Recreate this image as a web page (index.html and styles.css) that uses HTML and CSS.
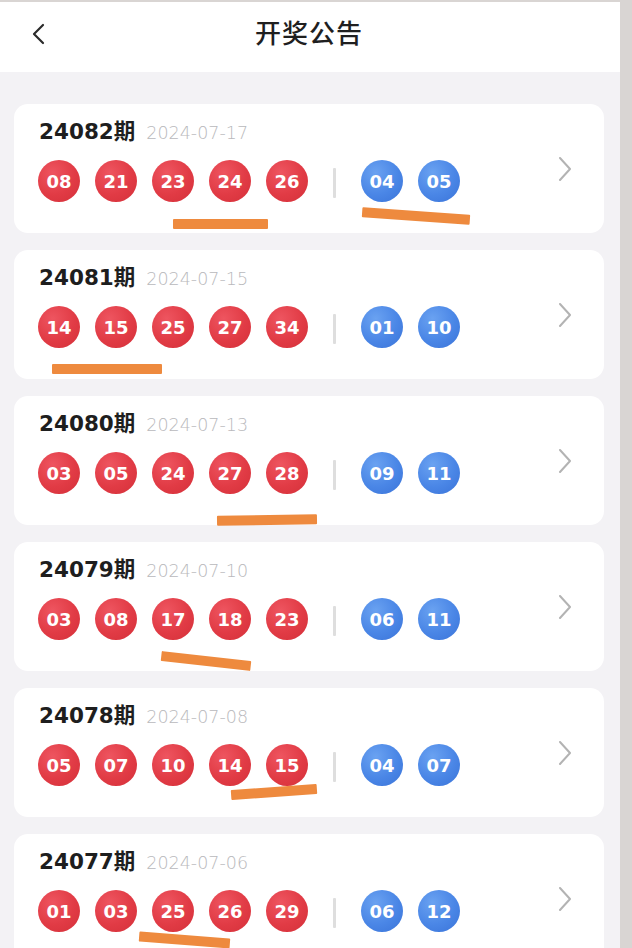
FILE: index.html
```html
<!DOCTYPE html>
<html lang="zh-CN">
<head>
<meta charset="utf-8">
<title>开奖公告</title>
<link rel="stylesheet" href="styles.css">
</head>
<body>
<div class="screen">
  <header class="topbar">
    <svg class="back" width="20" height="24" viewBox="0 0 20 24"><polyline points="13,3 4,12 13,21" fill="none" stroke="#2b2b2b" stroke-width="2.2" stroke-linecap="round" stroke-linejoin="round"/></svg>
    <h1 class="title">开奖公告</h1>
  </header>
  <main class="list">
    <section class="card">
      <div class="info">
        <div class="head"><span class="issue">24082期</span><span class="date">2024-07-17</span></div>
        <div class="balls">
          <span class="ball red">08</span><span class="ball red">21</span><span class="ball red">23</span><span class="ball red">24</span><span class="ball red">26</span>
          <span class="sep"></span>
          <span class="ball blue">04</span><span class="ball blue">05</span>
        </div>
      </div>
      <svg class="arrow" width="14" height="24" viewBox="0 0 14 24"><polyline points="2,1 12,12 2,23" fill="none" stroke="#b3b3b3" stroke-width="2" stroke-linecap="round" stroke-linejoin="round"/></svg>
      <span class="mark mark-1a"></span><span class="mark mark-1b"></span>
    </section>
    <section class="card">
      <div class="info">
        <div class="head"><span class="issue">24081期</span><span class="date">2024-07-15</span></div>
        <div class="balls">
          <span class="ball red">14</span><span class="ball red">15</span><span class="ball red">25</span><span class="ball red">27</span><span class="ball red">34</span>
          <span class="sep"></span>
          <span class="ball blue">01</span><span class="ball blue">10</span>
        </div>
      </div>
      <svg class="arrow" width="14" height="24" viewBox="0 0 14 24"><polyline points="2,1 12,12 2,23" fill="none" stroke="#b3b3b3" stroke-width="2" stroke-linecap="round" stroke-linejoin="round"/></svg>
      <span class="mark mark-2"></span>
    </section>
    <section class="card">
      <div class="info">
        <div class="head"><span class="issue">24080期</span><span class="date">2024-07-13</span></div>
        <div class="balls">
          <span class="ball red">03</span><span class="ball red">05</span><span class="ball red">24</span><span class="ball red">27</span><span class="ball red">28</span>
          <span class="sep"></span>
          <span class="ball blue">09</span><span class="ball blue">11</span>
        </div>
      </div>
      <svg class="arrow" width="14" height="24" viewBox="0 0 14 24"><polyline points="2,1 12,12 2,23" fill="none" stroke="#b3b3b3" stroke-width="2" stroke-linecap="round" stroke-linejoin="round"/></svg>
      <span class="mark mark-3"></span>
    </section>
    <section class="card">
      <div class="info">
        <div class="head"><span class="issue">24079期</span><span class="date">2024-07-10</span></div>
        <div class="balls">
          <span class="ball red">03</span><span class="ball red">08</span><span class="ball red">17</span><span class="ball red">18</span><span class="ball red">23</span>
          <span class="sep"></span>
          <span class="ball blue">06</span><span class="ball blue">11</span>
        </div>
      </div>
      <svg class="arrow" width="14" height="24" viewBox="0 0 14 24"><polyline points="2,1 12,12 2,23" fill="none" stroke="#b3b3b3" stroke-width="2" stroke-linecap="round" stroke-linejoin="round"/></svg>
      <span class="mark mark-4"></span>
    </section>
    <section class="card">
      <div class="info">
        <div class="head"><span class="issue">24078期</span><span class="date">2024-07-08</span></div>
        <div class="balls">
          <span class="ball red">05</span><span class="ball red">07</span><span class="ball red">10</span><span class="ball red">14</span><span class="ball red">15</span>
          <span class="sep"></span>
          <span class="ball blue">04</span><span class="ball blue">07</span>
        </div>
      </div>
      <svg class="arrow" width="14" height="24" viewBox="0 0 14 24"><polyline points="2,1 12,12 2,23" fill="none" stroke="#b3b3b3" stroke-width="2" stroke-linecap="round" stroke-linejoin="round"/></svg>
      <span class="mark mark-5"></span>
    </section>
    <section class="card">
      <div class="info">
        <div class="head"><span class="issue">24077期</span><span class="date">2024-07-06</span></div>
        <div class="balls">
          <span class="ball red">01</span><span class="ball red">03</span><span class="ball red">25</span><span class="ball red">26</span><span class="ball red">29</span>
          <span class="sep"></span>
          <span class="ball blue">06</span><span class="ball blue">12</span>
        </div>
      </div>
      <svg class="arrow" width="14" height="24" viewBox="0 0 14 24"><polyline points="2,1 12,12 2,23" fill="none" stroke="#b3b3b3" stroke-width="2" stroke-linecap="round" stroke-linejoin="round"/></svg>
      <span class="mark mark-6"></span>
    </section>
  </main>
</div>
</body>
</html>
```
FILE: styles.css
```css
* { box-sizing: border-box; }

html, body {
  margin: 0;
  padding: 0;
  height: 948px;
  overflow: hidden;
}

body {
  background: #d9d5d3;
  font-family: "DejaVu Sans", "Noto Sans CJK SC", sans-serif;
}

.screen {
  width: 620px;
  height: 948px;
  margin-top: 2px;
  background: #f3f2f5;
  overflow: hidden;
}

.topbar {
  position: relative;
  height: 70px;
  background: #ffffff;
  display: flex;
  align-items: center;
  justify-content: center;
  padding-bottom: 10px;
}

.back {
  position: absolute;
  left: 30px;
  top: 20px;
}

.title {
  margin: 0 0 0 -2px;
  font-family: "Noto Sans CJK SC", sans-serif;
  font-size: 26px;
  line-height: 36px;
  font-weight: 500;
  color: #1f1f1f;
  letter-spacing: 1px;
}

.list {
  display: flex;
  flex-direction: column;
  gap: 17px;
  padding: 32px 16px 0 14px;
}

.card {
  position: relative;
  height: 129px;
  background: #ffffff;
  border-radius: 14px;
  display: flex;
  align-items: flex-start;
  padding: 14px 32px 0 24px;
}

.info {
  flex: 1;
  display: flex;
  flex-direction: column;
  gap: 14px;
}

.head {
  display: flex;
  align-items: baseline;
  height: 28px;
  padding-left: 1px;
}

.issue {
  font-family: "DejaVu Sans", "Noto Sans CJK SC", sans-serif;
  font-weight: bold;
  font-size: 21.5px;
  color: #1e1e1e;
  line-height: 28px;
}

.date {
  margin-left: 11px;
  font-size: 17.5px;
  color: #b9b9bc;
  line-height: 28px;
  font-weight: 300;
}

.balls {
  display: flex;
  align-items: center;
  gap: 15px;
  height: 42px;
}

.ball {
  width: 42px;
  height: 42px;
  border-radius: 50%;
  display: flex;
  align-items: center;
  justify-content: center;
  color: #ffffff;
  font-family: "DejaVu Sans", sans-serif;
  font-weight: bold;
  font-size: 18px;
  letter-spacing: 0;
}

.red {
  background: radial-gradient(circle at 35% 30%, #ee5560 0%, #e13b45 55%, #d43039 100%);
}

.blue {
  background: radial-gradient(circle at 35% 30%, #6aa2f1 0%, #4a86e6 55%, #3a73d8 100%);
}

.sep {
  width: 3px;
  height: 30px;
  margin: 4px 10px 0;
  background: #dedede;
  border-radius: 1px;
}

.arrow {
  flex: none;
  align-self: center;
  margin-top: -14px;
}

.mark {
  position: absolute;
  height: 10px;
  background: #ee8a3e;
  border-radius: 1px;
  transform-origin: center;
}

.mark-1a { left: 159px; top: 115px; width: 95px; }
.mark-1b { left: 348px; top: 107px; width: 108px; transform: rotate(4deg); }
.mark-2  { left: 38px;  top: 114px; width: 110px; }
.mark-3  { left: 203px; top: 119px; width: 100px; transform: rotate(-0.8deg); }
.mark-4  { left: 147px; top: 114px; width: 90px; transform: rotate(6.4deg); }
.mark-5  { left: 217px; top: 99px;  width: 86px; transform: rotate(-4deg); }
.mark-6  { left: 125px; top: 101px; width: 91px; transform: rotate(4.4deg); }
```
